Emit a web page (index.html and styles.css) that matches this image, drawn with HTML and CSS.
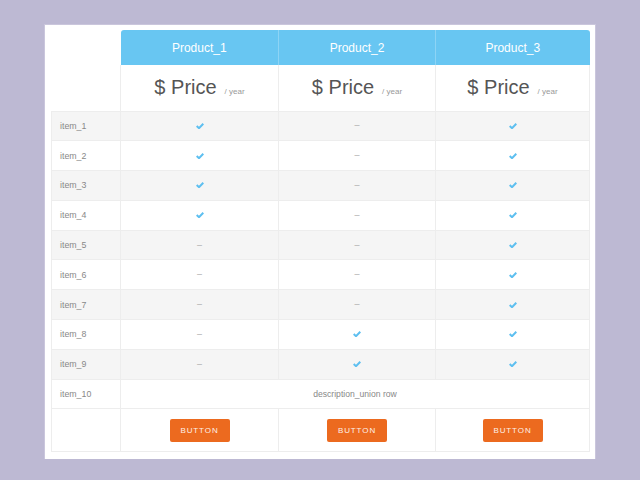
FILE: index.html
```html
<!DOCTYPE html>
<html>
<head>
<meta charset="utf-8">
<link rel="stylesheet" href="styles.css">
</head>
<body>
<div class="card">
<table class="pricing">
  <colgroup>
    <col class="c-label"><col class="c-p1"><col class="c-p2"><col class="c-p3">
  </colgroup>
  <thead>
    <tr class="head">
      <th class="blank"></th>
      <th class="prod first">Product_1</th>
      <th class="prod">Product_2</th>
      <th class="prod last">Product_3</th>
    </tr>
    <tr class="price-row">
      <td class="blank"></td>
      <td><span class="price">$ Price</span><span class="per">/ year</span></td>
      <td><span class="price">$ Price</span><span class="per">/ year</span></td>
      <td><span class="price">$ Price</span><span class="per">/ year</span></td>
    </tr>
  </thead>
  <tbody>
    <tr class="odd"><td class="label">item_1</td><td><svg class="chk" viewBox="0 0 8 6"><path d="M0.7 3.1 L3 5.2 L7.3 0.8"/></svg></td><td><span class="dash">–</span></td><td><svg class="chk" viewBox="0 0 8 6"><path d="M0.7 3.1 L3 5.2 L7.3 0.8"/></svg></td></tr>
    <tr><td class="label">item_2</td><td><svg class="chk" viewBox="0 0 8 6"><path d="M0.7 3.1 L3 5.2 L7.3 0.8"/></svg></td><td><span class="dash">–</span></td><td><svg class="chk" viewBox="0 0 8 6"><path d="M0.7 3.1 L3 5.2 L7.3 0.8"/></svg></td></tr>
    <tr class="odd"><td class="label">item_3</td><td><svg class="chk" viewBox="0 0 8 6"><path d="M0.7 3.1 L3 5.2 L7.3 0.8"/></svg></td><td><span class="dash">–</span></td><td><svg class="chk" viewBox="0 0 8 6"><path d="M0.7 3.1 L3 5.2 L7.3 0.8"/></svg></td></tr>
    <tr><td class="label">item_4</td><td><svg class="chk" viewBox="0 0 8 6"><path d="M0.7 3.1 L3 5.2 L7.3 0.8"/></svg></td><td><span class="dash">–</span></td><td><svg class="chk" viewBox="0 0 8 6"><path d="M0.7 3.1 L3 5.2 L7.3 0.8"/></svg></td></tr>
    <tr class="odd"><td class="label">item_5</td><td><span class="dash">–</span></td><td><span class="dash">–</span></td><td><svg class="chk" viewBox="0 0 8 6"><path d="M0.7 3.1 L3 5.2 L7.3 0.8"/></svg></td></tr>
    <tr><td class="label">item_6</td><td><span class="dash">–</span></td><td><span class="dash">–</span></td><td><svg class="chk" viewBox="0 0 8 6"><path d="M0.7 3.1 L3 5.2 L7.3 0.8"/></svg></td></tr>
    <tr class="odd"><td class="label">item_7</td><td><span class="dash">–</span></td><td><span class="dash">–</span></td><td><svg class="chk" viewBox="0 0 8 6"><path d="M0.7 3.1 L3 5.2 L7.3 0.8"/></svg></td></tr>
    <tr><td class="label">item_8</td><td><span class="dash">–</span></td><td><svg class="chk" viewBox="0 0 8 6"><path d="M0.7 3.1 L3 5.2 L7.3 0.8"/></svg></td><td><svg class="chk" viewBox="0 0 8 6"><path d="M0.7 3.1 L3 5.2 L7.3 0.8"/></svg></td></tr>
    <tr class="odd"><td class="label">item_9</td><td><span class="dash">–</span></td><td><svg class="chk" viewBox="0 0 8 6"><path d="M0.7 3.1 L3 5.2 L7.3 0.8"/></svg></td><td><svg class="chk" viewBox="0 0 8 6"><path d="M0.7 3.1 L3 5.2 L7.3 0.8"/></svg></td></tr>
    <tr><td class="label">item_10</td><td colspan="3" class="desc">description_union row</td></tr>
    <tr class="btn-row"><td class="label"></td><td><button class="btn">BUTTON</button></td><td><button class="btn">BUTTON</button></td><td><button class="btn">BUTTON</button></td></tr>
  </tbody>
</table>
</div>
</body>
</html>
```

FILE: styles.css
```css
html, body {
  margin: 0;
  padding: 0;
  background: #bdb9d3;
  font-family: "Liberation Sans", Arial, sans-serif;
}
.card {
  margin: 25px 0 0 45px;
  width: 538px;
  height: 422px;
  padding: 5px 6px 7px 6px;
  background: #fff;
  box-shadow: 0 0 0 1px #cac6dc;
}
.pricing {
  width: 538px;
  border-collapse: collapse;
  table-layout: fixed;
}
.c-label { width: 69px; }
.c-p1 { width: 158px; }
.c-p2 { width: 157px; }
.c-p3 { width: 154px; }
.pricing td, .pricing th {
  padding: 0;
  text-align: center;
  vertical-align: middle;
  border: 1px solid #ededed;
}
.pricing .blank {
  border: none;
  border-right: 1px solid #ededed;
}
.head { height: 35px; }
.head .blank { border-right: none; }
.prod {
  background: #68c6f2;
  color: #fff;
  font-weight: normal;
  font-size: 12px;
  border: none !important;
  border-left: 1px solid #8dd4f5 !important;
}
.prod.first {
  border-left: none !important;
  border-top-left-radius: 3px;
}
.prod.last { border-top-right-radius: 3px; }
.price-row { height: 46px; }
.price-row td { border-top: none; }
.price {
  font-size: 20px;
  color: #555;
}
.per {
  font-size: 8px;
  color: #999;
  margin-left: 8px;
}
tbody tr { height: 29.8px; }
tbody tr.odd { background: #f5f5f5; }
.label {
  text-align: left !important;
  padding-left: 8px !important;
  font-size: 8.8px;
  color: #888;
}
.chk {
  display: block;
  margin: 0 auto;
  width: 8px;
  height: 6px;
}
.chk path {
  fill: none;
  stroke: #5dbff0;
  stroke-width: 2;
}
.dash {
  display: block;
  font-size: 9px;
  line-height: 9px;
  color: #aaa;
}
.desc {
  font-size: 8.6px;
  color: #888;
}
.btn-row { height: 43px; }
.btn {
  width: 60px;
  height: 23px;
  border: none;
  border-radius: 2px;
  background: #ec6a1f;
  color: #fdf0e8;
  font-family: "Liberation Sans", Arial, sans-serif;
  font-size: 8px;
  letter-spacing: 0.9px;
  padding: 0;
}
```
